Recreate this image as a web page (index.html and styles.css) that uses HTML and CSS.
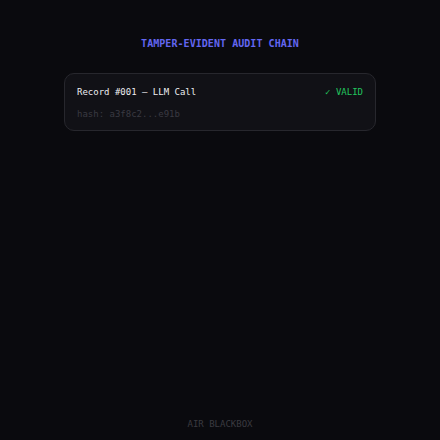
FILE: index.html
```html
<!DOCTYPE html>
<html lang="en">

<head>
    <meta charset="UTF-8">
    <meta name="viewport" content="width=device-width, initial-scale=1.0">
    <title>Audit Chain</title>
    <link rel="stylesheet" href="styles.css">
</head>

<body>
    <div class="page">
        <!-- Heading -->
        <h1 class="title">TAMPER-EVIDENT AUDIT CHAIN</h1>

        <!-- Chain records -->
        <div class="chain">
            <div class="record">
                <div class="record-head">
                    <span class="record-name">Record #001 — LLM Call</span>
                    <span class="record-status">✓ VALID</span>
                </div>
                <div class="record-hash">hash: a3f8c2...e91b</div>
            </div>
        </div>

        <div class="footer">AIR BLACKBOX</div>
    </div>
</body>

</html>
```

FILE: styles.css
```css
/* General styles */
body {
    margin: 0;
    background-color: #0a0a0e;
    font-family: "DejaVu Sans Mono", "Liberation Mono", monospace;
}

.page {
    height: 440px;
    box-sizing: border-box;
    padding: 38px 0 10px;
    display: flex;
    flex-direction: column;
    align-items: center;
}

.title {
    margin: 0;
    font-size: 10px;
    line-height: 12px;
    font-weight: bold;
    letter-spacing: 0.05px;
    color: #6366f1;
}

/* Records */
.chain {
    margin-top: 23px;
    width: 312px;
}

.record {
    background: #111116;
    border: 1px solid #27272d;
    border-radius: 10px;
    padding: 11px 12px 9px;
}

.record-head {
    display: flex;
    justify-content: space-between;
    font-size: 9px;
    line-height: 14px;
}

.record-name {
    color: #ececf0;
}

.record-status {
    color: #22c55e;
}

.record-hash {
    margin-top: 8px;
    font-size: 9px;
    line-height: 14px;
    color: #3a3a42;
}

.footer {
    margin-top: auto;
    font-size: 9px;
    line-height: 12px;
    color: #3a3a40;
}
```
